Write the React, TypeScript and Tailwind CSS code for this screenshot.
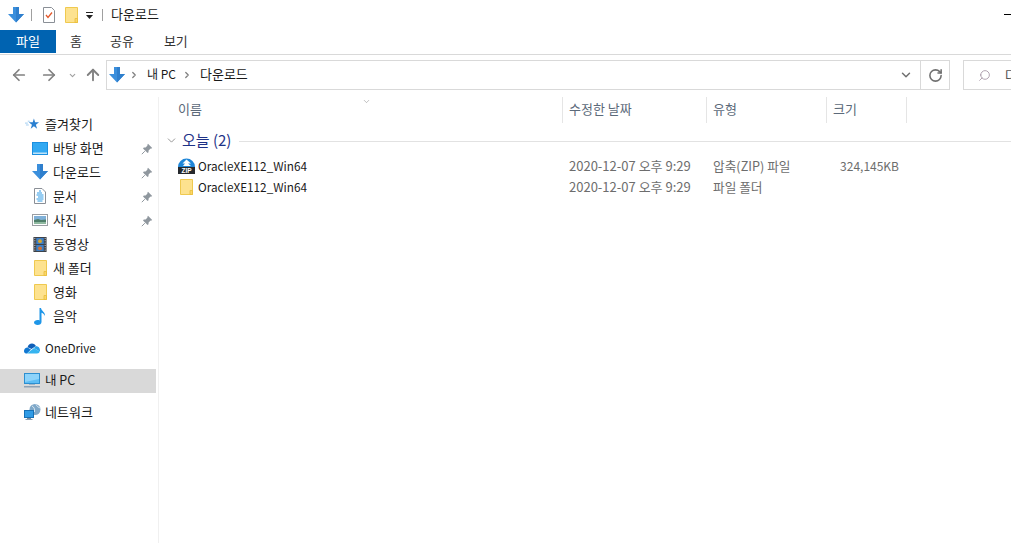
import { ArrowLeft, ArrowRight, ArrowUp, ChevronDown, ChevronRight, RotateCw, Search } from "lucide-react";

const font = { fontFamily: '"Noto Sans CJK KR", "Open Sans", sans-serif' };

function DownArrow({ className }: { className?: string }) {
  return (
    <svg viewBox="0 0 16 16" className={className}>
      <path d="M5 0h6v7h5l-8 8.5L0 7h5z" fill="#3b8fdc" />
      <path d="M8 0h3v7h5l-8 8.5z" fill="#2f7fcd" />
    </svg>
  );
}

function Folder({ className }: { className?: string }) {
  return (
    <svg viewBox="0 0 13 16" className={className}>
      <path d="M.5.5h12v15H.5z" fill="#fde28f" stroke="#efc94f" />
      <path d="M10 15.5v-4h2.5v4z" fill="#fbd768" stroke="#e8bd3c" strokeWidth="0.8" />
    </svg>
  );
}

function Pin() {
  return (
    <svg viewBox="0 0 12 12" className="ml-auto mr-[3px] mt-[2px] h-[12px] w-[12px]">
      <path d="M7 .8l4.2 4.2-1.2.7-.5-.2L7.6 7.4 7.5 9.2 6.6 10 2 5.4l.8-.9 1.8-.1 1.9-1.9-.2-.5z" fill="#8f979e" />
      <path d="M3.8 8.2L.8 11.2" stroke="#8f979e" />
    </svg>
  );
}

function Desktop() {
  return (
    <svg viewBox="0 0 16 13" className="h-[13px] w-[16px]">
      <rect width="16" height="13" fill="#1b8fe0" />
      <rect x="1" y="1" width="14" height="10" fill="#32a9f2" />
      <rect x="1" y="10.5" width="14" height="1.5" fill="#bfe3f8" />
    </svg>
  );
}

function Documents() {
  return (
    <svg viewBox="0 0 12 16" className="h-[16px] w-[12px]">
      <path d="M.5.5h7.5l3.5 3.5v11.5H.5z" fill="#fff" stroke="#8a8f96" />
      <path d="M5 3h2M3 5h5M2.500 7h7M4 9h5.500M2.500 11h7M3.500 13h5" stroke="#2e9be6" />
    </svg>
  );
}

function Pictures() {
  return (
    <svg viewBox="0 0 16 12" className="h-[12px] w-[16px]">
      <rect x=".5" y=".5" width="15" height="11" fill="#fff" stroke="#9a9ea3" />
      <rect x="2" y="2" width="12" height="4" fill="#7fb0d8" />
      <path d="M2 6l4-1 3 1 5-.5V10H2z" fill="#4f7f6a" />
      <rect x="2" y="8" width="12" height="2" fill="#8fb9a0" />
    </svg>
  );
}

function Videos() {
  return (
    <svg viewBox="0 0 14 16" className="h-[15px] w-[14px]">
      <rect width="14" height="16" fill="#3b3f45" />
      <rect x="3" y="1" width="8" height="6.500" fill="#3f7fc4" />
      <rect x="3" y="8.500" width="8" height="6.500" fill="#3f7fc4" />
      <circle cx="7" cy="4.500" r="2" fill="#d8a72c" />
      <circle cx="7" cy="12" r="2" fill="#d8702c" />
      <path d="M1 1.500h1M1 4h1M1 6.500h1M1 9h1M1 11.500h1M1 14h1M12 1.500h1M12 4h1M12 6.500h1M12 9h1M12 11.500h1M12 14h1" stroke="#e6e6e6" />
    </svg>
  );
}

function Music() {
  return (
    <svg viewBox="0 0 12 17" className="h-[17px] w-[12px]">
      <path d="M5.500 0h1.500c.3 3 4.500 4 4 8-.8-2-2.500-3-3.500-3.200V14c0 1.800-1.700 3-3.800 3S0 16 0 14.500 1.800 12 3.600 12c.7 0 1.400.1 1.900.4z" fill="#1e96e8" />
    </svg>
  );
}

function QuickStar() {
  return (
    <svg viewBox="0 0 16 13" className="h-[13px] w-[15px]">
      <path d="M9.500 0l1.300 4.200h4.200l-3.400 2.600 1.300 4.200-3.400-2.600-3.400 2.600 1.300-4.200-3.400-2.600h4.200z" fill="#2a7fd0" />
      <path d="M0 5h3M1 7h3M3 3h2" stroke="#9ccbf0" />
    </svg>
  );
}

function OneDrive() {
  return (
    <svg viewBox="0 0 16 11" className="h-[11px] w-[16px]">
      <path d="M3.500 4.500C4 2 6 .5 8 .5c1.800 0 3.200 1 3.900 2.500l-4.400 3-2.500-1.300z" fill="#0f5fb8" />
      <path d="M3.500 4.500L7 6.500 3 10.500H2C.8 10.500 0 9.500 0 8c0-1.700 1.500-3.500 3.500-3.500z" fill="#1178d2" />
      <path d="M11.900 3C14.300 3.200 16 5 16 7.200c0 .6-.1 1.100-.3 1.300L10 5z" fill="#2aa0e8" />
      <path d="M3 10.500L10 5l5.700 3.500c-.3 1.200-1.200 2-2.700 2z" fill="#35b4f0" />
    </svg>
  );
}

function ThisPC() {
  return (
    <svg viewBox="0 0 16 15" className="h-[15px] w-[16px]">
      <rect x=".5" y=".5" width="15" height="10" fill="#5cbdf5" stroke="#2d8fd0" />
      <path d="M1 1h14v5L1 9z" fill="#8dd3fa" />
      <rect x="5" y="11" width="6" height="1" fill="#9fb4c6" />
      <rect x="0" y="13" width="16" height="1.500" fill="#8ea2b5" />
    </svg>
  );
}

function Network() {
  return (
    <svg viewBox="0 0 17 16" className="h-[16px] w-[17px]">
      <circle cx="11" cy="5.500" r="5.500" fill="#7fa8c9" />
      <path d="M8 2c2 1 3 3 2.500 6M12 .5c1 2 2.500 3 4.500 3.500" stroke="#d8e6f0" fill="none" />
      <rect x=".5" y="6.500" width="9" height="7" fill="#2f9be6" stroke="#1670b5" />
      <rect x="3" y="14" width="4" height="1" fill="#7d8f9f" />
      <rect x="1.500" y="15" width="7" height="1" fill="#8ea2b5" />
    </svg>
  );
}

function ZipIcon() {
  return (
    <svg viewBox="0 0 17 16" className="h-[16px] w-[17px]">
      <path d="M0 9a8.500 8.500 0 0 1 17 0z" fill="#1f86d8" />
      <path d="M8.500 1.500l4.500 4h-3l3 2.500H5l2-2.500H4.500z" fill="#fff" />
      <rect y="9" width="17" height="7" fill="#26292d" />
      <text x="8.500" y="15" textAnchor="middle" fontSize="6.500" fontWeight="700" fill="#fff" fontFamily="Liberation Sans, sans-serif">ZIP</text>
    </svg>
  );
}

function NavRow({
  icon,
  label,
  pinned,
}: {
  icon: React.ReactNode;
  label: string;
  pinned?: boolean;
}) {
  return (
    <div className="flex h-[24px] items-center pl-[30px] pr-[2px]">
      <span className="flex w-[23px] shrink-0 items-center justify-center pr-[3px]">{icon}</span>
      <span className="text-[13px] text-[#1a1a1a]">{label}</span>
      {pinned && <Pin />}
    </div>
  );
}

function FileRow({ icon, name, type, size }: { icon: React.ReactNode; name: string; type: string; size?: string }) {
  return (
    <div className="flex h-[21px] items-center">
      <span className="flex w-[39px] shrink-0 items-center justify-center pl-[18px] pr-[3px]">{icon}</span>
      <span className="w-[371px] shrink-0 text-[11.75px] text-[#1a1a1a]">{name}</span>
      <span className="w-[144px] shrink-0 text-[13px] text-[#6d6d6d]">2020-12-07 오후 9:29</span>
      <span className="w-[120px] shrink-0 text-[12.7px] text-[#6d6d6d]">{type}</span>
      <span className="w-[66px] shrink-0 text-right text-[12px] text-[#6d6d6d]">{size}</span>
    </div>
  );
}

export default function App() {
  return (
    <div style={font} className="flex h-[543px] w-[1011px] flex-col overflow-hidden bg-white">
      {/* title bar */}
      <div className="flex h-[30px] shrink-0 items-center">
        <DownArrow className="ml-[8px] h-[16px] w-[16px]" />
        <div className="ml-[7px] h-[12px] w-px bg-[#a0a0a0]" />
        <svg viewBox="0 0 12 16" className="ml-[11px] h-[16px] w-[12px]">
          <path d="M.5.500h8l3 3v12H.5z" fill="#fff" stroke="#8a8f96" />
          <path d="M3 8l2 2.500 4-5" stroke="#e2572b" strokeWidth="1.300" fill="none" />
        </svg>
        <Folder className="ml-[10px] h-[16px] w-[13px]" />
        <svg viewBox="0 0 7 8" className="ml-[8px] mt-[2px] h-[8px] w-[7px]">
          <path d="M0 0h7v1H0zM0 3h7L3.500 7z" fill="#222" />
        </svg>
        <div className="ml-[9px] h-[12px] w-px bg-[#a0a0a0]" />
        <span className="ml-[8px] pb-[2px] text-[13px] text-[#1a1a1a]">다운로드</span>
        <div className="ml-auto mb-[2px] h-px w-[7px] bg-black" />
      </div>

      {/* ribbon tabs */}
      <div className="h-[25px] shrink-0 border-b border-[#d9d9d9]">
        <div className="flex h-[23px] items-stretch text-[13px] text-[#333]">
          <div className="flex w-[56px] items-center justify-center bg-[#0063b1] pb-px text-white">파일</div>
          <div className="ml-[14px] flex items-center pb-px">홈</div>
          <div className="ml-[28px] flex items-center pb-px">공유</div>
          <div className="ml-[30px] flex items-center pb-px">보기</div>
        </div>
      </div>

      {/* address row */}
      <div className="mt-[5px] flex h-[30px] shrink-0 items-center">
        <ArrowLeft className="ml-[10px] h-[18px] w-[18px] shrink-0 text-[#808080]" strokeWidth={2.300} />
        <ArrowRight className="ml-[12px] h-[18px] w-[18px] shrink-0 text-[#808080]" strokeWidth={2.300} />
        <ChevronDown className="ml-[10px] h-[9px] w-[9px] shrink-0 text-[#a0a0a0]" strokeWidth={3} />
        <ArrowUp className="ml-[7px] h-[18px] w-[18px] shrink-0 text-[#808080]" strokeWidth={2.500} />
        <div className="ml-[4px] flex h-[30px] w-[815px] shrink-0 items-center border border-[#d9d9d9] text-[#1a1a1a]">
          <DownArrow className="ml-[2px] h-[16px] w-[16px]" />
          <ChevronRight className="ml-[4px] h-[10px] w-[10px] text-[#808080]" strokeWidth={3} />
          <span className="ml-[8px] pb-[2px] text-[12px]">내 PC</span>
          <ChevronRight className="ml-[6px] h-[10px] w-[10px] text-[#808080]" strokeWidth={3} />
          <span className="ml-[8px] pb-[2px] text-[13px]">다운로드</span>
          <ChevronDown className="ml-auto mr-[7px] h-[14px] w-[14px] text-[#707070]" strokeWidth={2.500} />
        </div>
        <div className="flex h-[30px] w-[29px] shrink-0 items-center justify-center border border-l-0 border-[#d9d9d9]">
          <RotateCw className="h-[15px] w-[15px] text-[#707070]" strokeWidth={2.500} />
        </div>
        <div className="ml-[13px] flex h-[30px] min-w-0 flex-1 items-center overflow-hidden border border-r-0 border-[#d9d9d9] pl-[14px] text-[13px] text-[#555]">
          <Search className="h-[13px] w-[13px] shrink-0 -scale-x-100 text-[#a08f9f]" strokeWidth={1.500} />
          <span className="ml-[14px] whitespace-nowrap">다운로드 검색</span>
        </div>
      </div>

      {/* main */}
      <div className="mt-[7px] flex min-h-0 flex-1">
        <nav className="w-[159px] shrink-0 border-r border-[#f0f0f0] pt-[15px]">
          <div className="flex h-[24px] items-center pl-[25px] text-[13px] text-[#1a1a1a]">
            <QuickStar />
            <span className="ml-[5px]">즐겨찾기</span>
          </div>
          <NavRow icon={<Desktop />} label="바탕 화면" pinned />
          <NavRow icon={<DownArrow className="h-[16px] w-[16px]" />} label="다운로드" pinned />
          <NavRow icon={<Documents />} label="문서" pinned />
          <NavRow icon={<Pictures />} label="사진" pinned />
          <NavRow icon={<Videos />} label="동영상" />
          <NavRow icon={<Folder className="h-[16px] w-[13px]" />} label="새 폴더" />
          <NavRow icon={<Folder className="h-[16px] w-[13px]" />} label="영화" />
          <NavRow icon={<Music />} label="음악" />
          <div className="mt-[8px] flex h-[24px] items-center pl-[24px] text-[11.75px] text-[#1a1a1a]">
            <OneDrive />
            <span className="ml-[5px]">OneDrive</span>
          </div>
          <div className="mr-[2px] mt-[9px] flex h-[24px] items-center bg-[#d9d9d9] pb-px pl-[24px] text-[12.5px] text-[#1a1a1a]">
            <ThisPC />
            <span className="ml-[5px]">내 PC</span>
          </div>
          <div className="mt-[7px] flex h-[24px] items-center pl-[24px] text-[13px] text-[#1a1a1a]">
            <Network />
            <span className="ml-[4px]">네트워크</span>
          </div>
        </nav>

        <section className="relative min-w-0 flex-1">
          <ChevronDown className="absolute left-[202px] top-0 h-[9px] w-[11px] text-[#909090]" strokeWidth={1.500} />
          <div className="flex h-[26px] items-stretch text-[13px] text-[#5c6a7a]">
            <div className="flex w-[404px] items-center border-r border-[#e5e5e5] pb-[2px] pl-[19px]">이름</div>
            <div className="flex w-[144px] items-center border-r border-[#e5e5e5] pb-[2px] pl-[6px]">수정한 날짜</div>
            <div className="flex w-[120px] items-center border-r border-[#e5e5e5] pb-[2px] pl-[6px]">유형</div>
            <div className="flex w-[80px] items-center border-r border-[#e5e5e5] pb-[2px] pl-[6px]">크기</div>
          </div>
          <div className="mt-[7px] flex h-[20px] items-center">
            <ChevronDown className="ml-[6px] h-[13px] w-[13px] text-[#808080]" strokeWidth={1.500} />
            <span className="ml-[4px] whitespace-nowrap text-[15px] text-[#1e3287]">오늘 (2)</span>
            <div className="ml-[8px] mt-[2px] h-px flex-1 bg-[#e2e2e2]" />
          </div>
          <div className="mt-[5px] flex flex-col">
            <FileRow icon={<ZipIcon />} name="OracleXE112_Win64" type="압축(ZIP) 파일" size="324,145KB" />
            <FileRow icon={<Folder className="h-[16px] w-[13px]" />} name="OracleXE112_Win64" type="파일 폴더" />
          </div>
        </section>
      </div>
    </div>
  );
}
